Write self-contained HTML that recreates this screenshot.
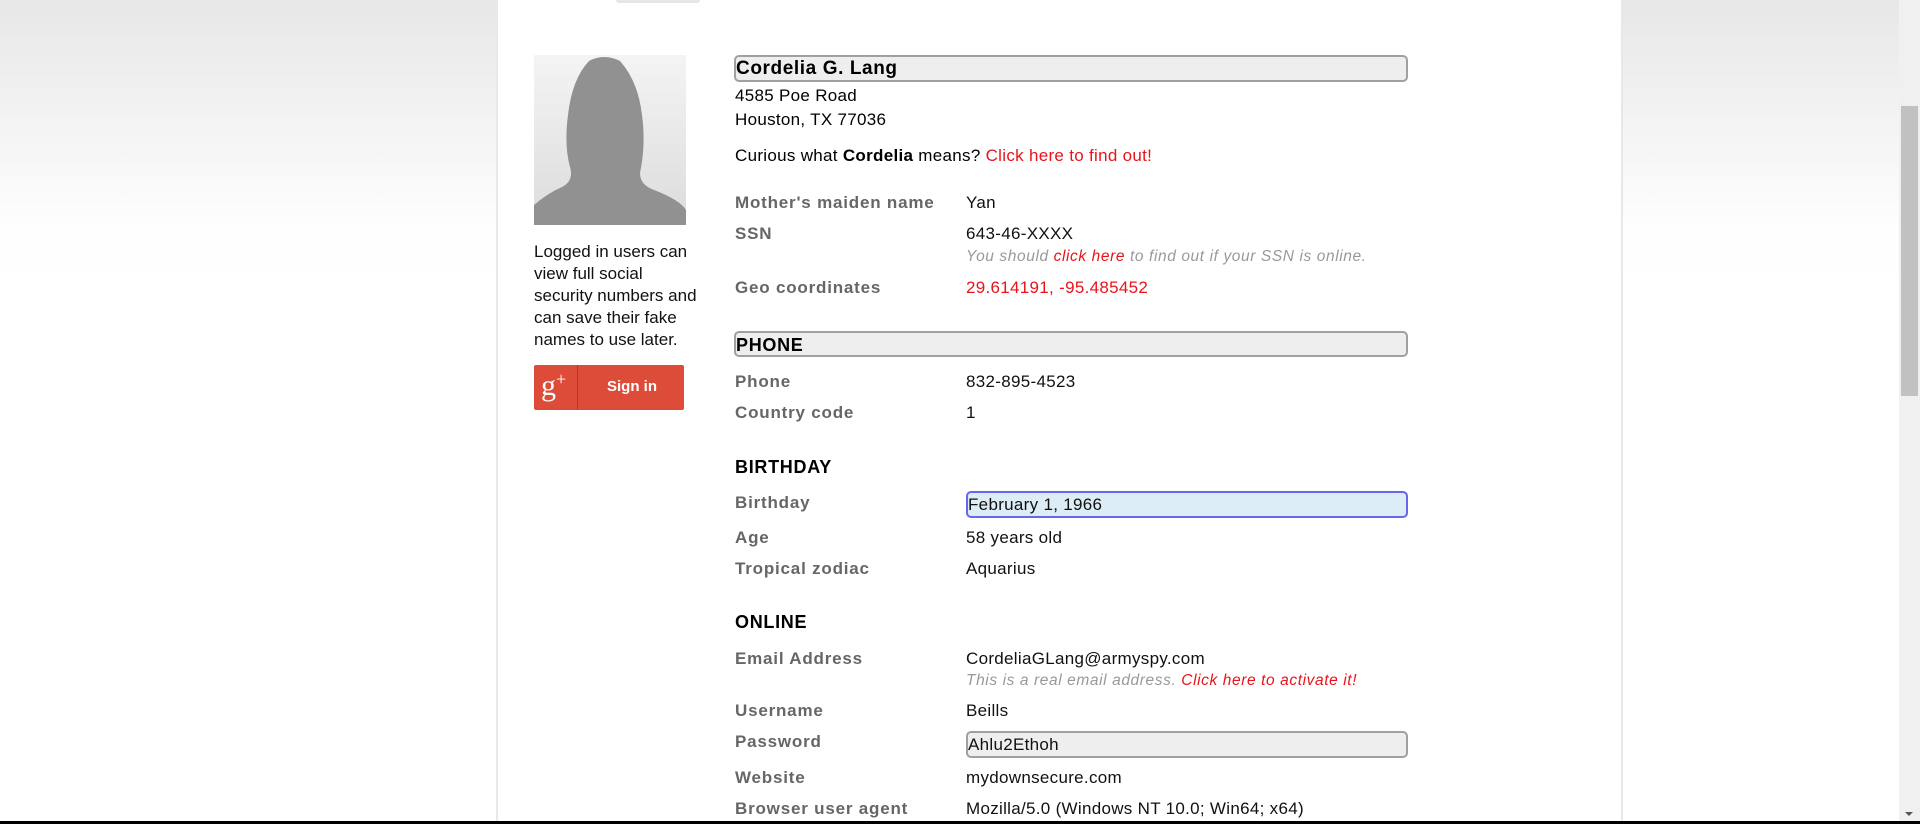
<!DOCTYPE html>
<html><head><meta charset="utf-8"><style>
*{margin:0;padding:0;box-sizing:border-box}
body{width:1920px;height:824px;overflow:hidden;position:relative;font-family:"Liberation Sans",Arial,sans-serif;background:linear-gradient(#e7e7e7 0px,#f6f6f6 150px,#fefefe 230px,#fff 300px);}
#panel{position:absolute;left:496px;top:0;width:1127px;height:824px;background:#fff;border-left:2px solid #e8e8e8;border-right:2px solid #e8e8e8}
#tab{position:absolute;left:616px;top:0;width:84px;height:3px;background:#e6e6e6;border-radius:0 0 3px 3px}
.a{position:absolute;white-space:nowrap}
.l{left:735px;font-weight:bold;color:#666;font-size:17px;letter-spacing:.8px}
.v{left:966px;color:#111;font-size:17px;letter-spacing:.3px}
.n{left:966px;color:#999;font-style:italic;font-size:15.5px;letter-spacing:.6px}
.r{color:#e8141b}
.box{position:absolute;border:2px solid #a0a0a0;border-radius:5px;background:#eee}
.h{left:735px;font-weight:bold;font-size:18px;color:#000;letter-spacing:.7px}
#scroll{position:absolute;left:1899px;top:0;width:21px;height:821px;background:#f0f0f0}
#thumb{position:absolute;left:1901px;top:106px;width:17px;height:290px;background:#c1c1c1}
</style></head><body>
<div id="panel"></div><div id="tab"></div>
<svg class="a" style="left:534px;top:55px" width="152" height="170" viewBox="0 0 152 170">
<defs><linearGradient id="g" x1="0" y1="0" x2="0" y2="1"><stop offset="0" stop-color="#f4f4f4"/><stop offset="1" stop-color="#dcdcdc"/></linearGradient></defs>
<rect width="152" height="170" fill="url(#g)"/>
<path d="M55 6 Q70 -2 86 6 Q104 26 108 60 Q112 90 106 118 Q106 130 120 135 Q146 145 152 155 L152 170 L0 170 L0 150 Q14 138 28 132 Q40 126 36 112 Q30 90 34 60 Q38 24 55 6Z" fill="#919191"/>
</svg>
<div class="a" style="left:534px;top:241px;font-size:17px;line-height:22px;color:#111">Logged in users can<br>view full social<br>security numbers and<br>can save their fake<br>names to use later.</div>
<div class="a" style="left:534px;top:365px;width:150px;height:45px;background:#dd4b39;border-radius:2px">
<div class="a" style="left:43px;top:0;width:1px;height:45px;background:#b8372a"></div>
<div class="a" style="left:7px;top:4px;color:#fff;font-family:'Liberation Serif',serif;font-size:30px">g<span style="font-size:18px;vertical-align:top">+</span></div>
<div class="a" style="left:73px;top:13px;color:#fff;font-weight:bold;font-size:15px">Sign in</div>
</div>
<div class="box" style="left:734px;top:55px;width:674px;height:27px"></div>
<div class="a" style="left:736px;top:58px;font-weight:bold;font-size:19px;letter-spacing:.6px">Cordelia G. Lang</div>
<div class="a" style="left:735px;top:84px;font-size:17px;line-height:24px;letter-spacing:.3px">4585 Poe Road<br>Houston, TX 77036</div>
<div class="a" style="left:735px;top:146px;font-size:17px;letter-spacing:.3px">Curious what <b>Cordelia</b> means? <span class="r">Click here to find out!</span></div>
<div class="a l" style="top:193px">Mother's maiden name</div><div class="a v" style="top:193px">Yan</div>
<div class="a l" style="top:224px">SSN</div><div class="a v" style="top:224px">643-46-XXXX</div>
<div class="a n" style="top:248px">You should <span class="r">click here</span> to find out if your SSN is online.</div>
<div class="a l" style="top:278px">Geo coordinates</div><div class="a v r" style="top:278px">29.614191, -95.485452</div>
<div class="box" style="left:734px;top:331px;width:674px;height:26px"></div>
<div class="a h" style="left:736px;top:335px">PHONE</div>
<div class="a l" style="top:372px">Phone</div><div class="a v" style="top:372px">832-895-4523</div>
<div class="a l" style="top:403px">Country code</div><div class="a v" style="top:403px">1</div>
<div class="a h" style="top:457px">BIRTHDAY</div>
<div class="a l" style="top:493px">Birthday</div>
<div class="box" style="left:966px;top:491px;width:442px;height:27px;border-color:#6666ee;background:#dcedf5"></div>
<div class="a v" style="left:968px;top:495px">February 1, 1966</div>
<div class="a l" style="top:528px">Age</div><div class="a v" style="top:528px">58 years old</div>
<div class="a l" style="top:559px">Tropical zodiac</div><div class="a v" style="top:559px">Aquarius</div>
<div class="a h" style="top:612px">ONLINE</div>
<div class="a l" style="top:649px">Email Address</div><div class="a v" style="top:649px">CordeliaGLang@armyspy.com</div>
<div class="a n" style="top:672px">This is a real email address. <span class="r">Click here to activate it!</span></div>
<div class="a l" style="top:701px">Username</div><div class="a v" style="top:701px">Beills</div>
<div class="a l" style="top:732px">Password</div>
<div class="box" style="left:966px;top:731px;width:442px;height:27px"></div>
<div class="a v" style="left:968px;top:735px">Ahlu2Ethoh</div>
<div class="a l" style="top:768px">Website</div><div class="a v" style="top:768px">mydownsecure.com</div>
<div class="a l" style="top:799px">Browser user agent</div><div class="a v" style="top:799px">Mozilla/5.0 (Windows NT 10.0; Win64; x64)</div>
<div id="scroll"></div><div id="thumb"></div>
<div class="a" style="left:1905px;top:812px;width:0;height:0;border-left:4px solid transparent;border-right:4px solid transparent;border-top:4px solid #555"></div>
<div class="a" style="left:0;top:821px;width:1920px;height:3px;background:#000"></div>
</body></html>
